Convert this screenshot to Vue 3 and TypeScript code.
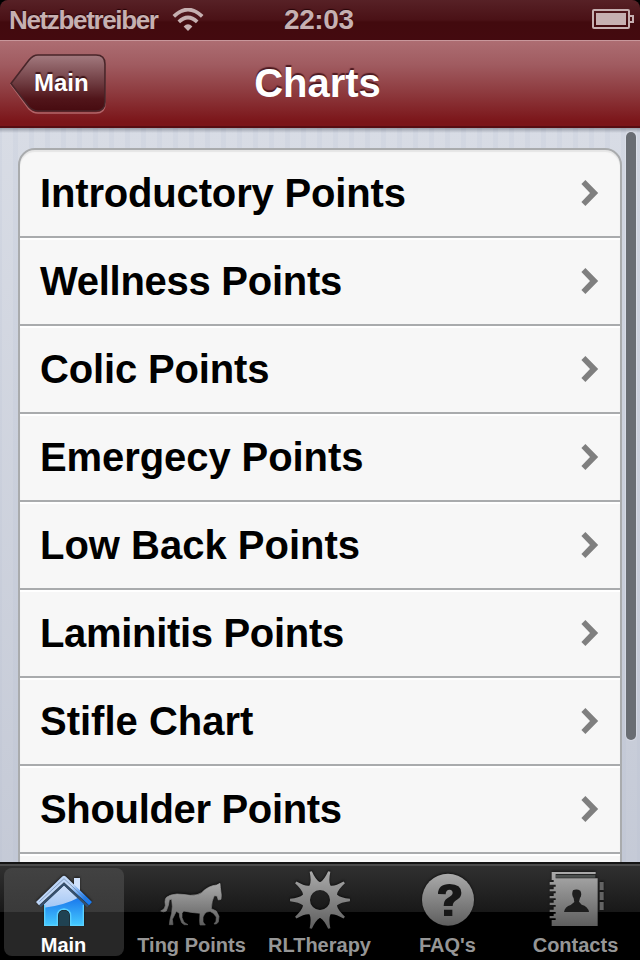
<script setup lang="ts">
import { ref } from 'vue'

interface Chart {
  name: string
  tracking: number
}

interface Tab {
  id: string
  label: string
}

const charts: Chart[] = [
  { name: 'Introductory Points', tracking: -0.16 },
  { name: 'Wellness Points', tracking: -0.27 },
  { name: 'Colic Points', tracking: -0.16 },
  { name: 'Emergecy Points', tracking: -0.08 },
  { name: 'Low Back Points', tracking: 0 },
  { name: 'Laminitis Points', tracking: -0.32 },
  { name: 'Stifle Chart', tracking: 0 },
  { name: 'Shoulder Points', tracking: -0.33 },
]

const tabs: Tab[] = [
  { id: 'main', label: 'Main' },
  { id: 'ting', label: 'Ting Points' },
  { id: 'therapy', label: 'RLTherapy' },
  { id: 'faq', label: "FAQ's" },
  { id: 'contacts', label: 'Contacts' },
]

const active = ref('main')

// Point on the sun icon, from its centre, in polar coordinates
function polar(radius: number, degrees: number): string {
  const a = (degrees * Math.PI) / 180
  return `${(180 + radius * Math.cos(a)).toFixed(1)} ${(120 + radius * Math.sin(a)).toFixed(1)}`
}

// Ten concave rays, drawn as one outline so that the gradient runs through all of them
const sunPath =
  'M' +
  Array.from({ length: 10 }, (_, i) => {
    const a = i * 36
    return [
      polar(54, a - 17),
      `Q${polar(62, a - 6)} ${polar(90, a - 2.2)}`,
      `L${polar(90, a + 2.2)}`,
      `Q${polar(62, a + 6)} ${polar(54, a + 17)}`,
    ].join('')
  }).join('L') +
  'ZM210 120A30 30 0 1 0 150 120A30 30 0 1 0 210 120Z'
</script>

<template>
  <div class="screen">
    <header class="status">
      <span class="carrier">Netzbetreiber</span>
      <svg class="wifi" width="32" height="24" viewBox="0 0 32 24">
        <g fill="none" stroke="#c6b0b1" stroke-width="3.7">
          <path d="M1.8 8.4Q16-5.2 30.2 8.4" />
          <path d="M6.8 13.9Q16 5.1 25.2 13.9" />
        </g>
        <path d="M11.6 18.4Q16 14 20.4 18.4L16 23Z" fill="#c6b0b1" />
      </svg>
      <span class="time">22:03</span>
      <svg class="battery" width="42" height="20" viewBox="0 0 42 20">
        <rect x="1" y="1" width="36" height="18" rx="1" fill="none" stroke="#c6b0b1" stroke-width="2" />
        <rect x="4" y="4" width="30" height="12" fill="#c6b0b1" />
        <path d="M38 7H41V13H38" fill="none" stroke="#c6b0b1" stroke-width="2" />
      </svg>
    </header>

    <nav class="nav">
      <button class="back" type="button">
        <svg class="back-shape" width="98" height="62" viewBox="0 0 98 62">
          <defs>
            <linearGradient id="backFill" x1="0" y1="0" x2="0" y2="1">
              <stop offset="0" stop-color="#a37a7f" />
              <stop offset="0.5" stop-color="#6e3b40" />
              <stop offset="0.78" stop-color="#51151a" />
              <stop offset="1" stop-color="#470b10" />
            </linearGradient>
          </defs>
          <path d="M29 3H87Q96 3 96 12V51Q96 60 87 60H29Q24 60 20 56L2 31.5L20 8Q24 3 29 3Z" fill="none" stroke="#c17c80" stroke-opacity=".75" stroke-width="1.5" />
          <path d="M29 2H87Q96 2 96 11V49Q96 58 87 58H29Q24 58 20 54L2 30.5L20 7Q24 2 29 2Z" fill="url(#backFill)" stroke="#482529" stroke-width="1.6" />
        </svg>
        <span class="back-label">Main</span>
      </button>
      <h1 class="title">Charts</h1>
    </nav>

    <main class="content">
      <ul class="list">
        <li v-for="chart in charts" :key="chart.name" class="row">
          <span :style="{ letterSpacing: chart.tracking + 'px' }">{{ chart.name }}</span>
          <svg width="18" height="28" viewBox="0 0 18 28">
            <path d="M4.4 1L17.2 14L4.4 27L.4 23L9 14L.4 5Z" fill="#7f7f7f" />
          </svg>
        </li>
        <li class="row"></li>
      </ul>
      <div class="scrollbar"></div>
    </main>

    <footer class="tabs">
      <svg class="defs" width="0" height="0">
        <defs>
          <linearGradient id="grey" x1="0" y1="0" x2="0" y2="1">
            <stop offset="0" stop-color="#aaa" />
            <stop offset="1" stop-color="#5e5e5e" />
          </linearGradient>
          <linearGradient id="sky" x1="0" y1="0" x2="0" y2="1">
            <stop offset="0" stop-color="#cfe0fa" />
            <stop offset="1" stop-color="#7fb2f0" />
          </linearGradient>
          <linearGradient id="deep" x1="0" y1="0" x2="0" y2="1">
            <stop offset="0" stop-color="#1976ec" />
            <stop offset="1" stop-color="#45cbff" />
          </linearGradient>
          <linearGradient id="roof" x1="0" y1="0" x2="1" y2="0.5">
            <stop offset="0" stop-color="#b5cff5" />
            <stop offset="0.65" stop-color="#c3daf9" />
            <stop offset="1" stop-color="#197af0" />
          </linearGradient>
        </defs>
      </svg>

      <button
        v-for="tab in tabs"
        :key="tab.id"
        type="button"
        class="tab"
        :class="{ active: active === tab.id }"
        @click="active = tab.id"
      >
        <svg v-if="tab.id === 'main'" class="icon" width="64" height="64" viewBox="96 84 192 192">
          <path d="M132 192L192 136L252 192V258H210V226Q210 208 192 206Q174 208 174 226V258H132Z" fill="url(#sky)" />
          <path d="M132 203Q190 198 238 172L252 190V258H210V226Q210 208 192 206Q174 208 174 226V258H132Z" fill="url(#deep)" />
          <path d="M134 195V256H172V227Q172 209 192 207Q212 209 212 227V256H250V195" fill="none" stroke="#5bd1ff" stroke-width="4" />
          <path d="M175 258V226Q175 214 192 211Q209 214 209 226V258Z" fill="#204252" />
          <path d="M222 114H240V153L222 136Z" fill="#d1e2fb" />
          <path d="M120 199L192 132L264 199" fill="none" stroke="#35506e" stroke-width="7" />
          <path d="M108 186L186 110Q192 105 198 110L276 186L267 196L192 127L117 196Z" fill="url(#roof)" />
          <path d="M118 185L192 116L266 185" fill="none" stroke="#5f7898" stroke-opacity=".6" stroke-width="3" />
        </svg>

        <svg v-else-if="tab.id === 'ting'" class="icon" width="64" height="64" viewBox="93 24 192 192">
          <path d="M95 153Q108 149 109 136Q105 112 118 109Q123 104 144 102Q166 103 184 106Q207 106 218 98Q238 77 263 75L273 70L274 82L277 106L276 118L268 120L264 108L256 107Q248 121 247 146L262 153L270 169L268 186L262 192H255L261 184L262 171L253 160L243 154Q231 155 227 161L222 171V186L229 195H213L212 184L213 160Q187 158 164 153L159 160V173L165 187L177 194H166L158 188L152 171L151 160L142 154L137 164L130 178L132 194H121L123 179L128 160L130 139L128 118L121 119Q120 136 112 153Q103 158 95 153Z" fill="url(#grey)" stroke="url(#grey)" stroke-width="2" />
        </svg>

        <svg v-else-if="tab.id === 'therapy'" class="icon" width="64" height="64" viewBox="84 24 192 192">
          <path :d="sunPath" fill="url(#grey)" fill-rule="evenodd" />
        </svg>

        <svg v-else-if="tab.id === 'faq'" class="icon" width="64" height="64" viewBox="93 24 192 192">
          <circle cx="189" cy="119" r="78" fill="url(#grey)" />
          <path d="M159 102Q159 72 194 72Q229 73 229 98Q229 110 218 118Q203 126 203 138H176Q176 122 187 115Q203 106 203 99Q203 90 194 89Q182 89 182 103ZM177 149H202V168H177Z" fill="#171717" />
        </svg>

        <svg v-else class="icon" width="64" height="64" viewBox="103 84 192 192">
          <path d="M126 96H258V102H138V115H264V258H126V254V240H138V235H120V228H132V221H138V216H120V209H132V200H138V195H120V188H132V180H138V175H120V168H132V160H138V154H120V148H132V140H138V134H120V126H132V120H126Z" fill="url(#grey)" />
          <path d="M139 104H257V113H139Z" fill="#4c504f" />
          <path d="M270 126H282V150H270ZM270 156H282V180H270ZM270 186H282V210H270Z" fill="#636363" />
          <path d="M190 151Q201 146 212 152Q218 164 211 174L208 185L216 194Q235 199 238 216H163Q166 200 183 195L194 186L192 175Q184 164 190 151Z" fill="#1d1d1d" />
        </svg>

        <span class="tab-label">{{ tab.label }}</span>
      </button>
    </footer>
  </div>
</template>

<style>
body {
  margin: 0;
  background: #000;
}
</style>

<style scoped>
.screen {
  width: 640px;
  height: 960px;
  display: flex;
  flex-direction: column;
  overflow: hidden;
  background: #000;
  font-family: "Liberation Sans", Arial, sans-serif;
  font-weight: bold;
}

.status {
  flex: none;
  box-sizing: border-box;
  height: 40px;
  padding: 0 6px 0 9px;
  display: grid;
  grid-template-columns: 163px 112px 1fr 42px;
  align-items: start;
  border-radius: 8px 8px 0 0;
  background: linear-gradient(#572126, #4a1116 50%, #420a0e 55%, #440a0f);
  color: #c6b0b1;
  line-height: 39px;
  text-shadow: 0 -1px 1px #260408;
}

.carrier {
  font-size: 26px;
  line-height: 41px;
  letter-spacing: -1.35px;
}

.wifi {
  margin-top: 8px;
}

.time {
  font-size: 28px;
  letter-spacing: -0.4px;
}

.battery {
  margin-top: 9px;
}

.nav {
  flex: none;
  box-sizing: border-box;
  height: 88px;
  padding: 0 9px;
  display: grid;
  grid-template-columns: 98px 1fr 106px;
  border-top: 1px solid #c8979b;
  border-bottom: 2px solid #570d12;
  background: linear-gradient(#ad6d72, #a05b60 28%, #8e3b3f 60%, #7b1519 95%);
}

.back {
  display: grid;
  justify-items: start;
  align-items: start;
  padding: 12px 0 0;
  border: 0;
  background: none;
  color: #fff;
  font: inherit;
}

.back-shape,
.back-label {
  grid-area: 1 / 1;
}

.back-label {
  padding-left: 25px;
  font-size: 24px;
  line-height: 60px;
  text-shadow: 0 -2px 1px #3d1519;
}

.title {
  margin: 0;
  padding-left: 3px;
  text-align: center;
  color: #fff;
  font-size: 40px;
  line-height: 84px;
  text-shadow: 0 -2px 1px #4d1a20;
}

.content {
  flex: none;
  box-sizing: border-box;
  height: 734px;
  padding: 20px 4px 0 18px;
  display: flex;
  justify-content: space-between;
  overflow: hidden;
  background:
    linear-gradient(rgba(60, 65, 80, 0.4), transparent 5px),
    linear-gradient(rgba(185, 190, 207, 0), rgba(178, 184, 200, 0.5)),
    repeating-linear-gradient(90deg, #d2d7e2 0 2px, #d8dce5 2px 13px, #d2d7e2 13px 16px);
}

.list {
  box-sizing: border-box;
  width: 604px;
  height: 880px;
  margin: 0;
  padding: 0;
  list-style: none;
  border: 2px solid #a9abad;
  border-radius: 17px 17px 0 0;
  background: #f7f7f7;
  box-shadow: inset 0 2px 1px #e5e5e5;
}

.row {
  box-sizing: border-box;
  height: 88px;
  padding: 0 21px 0 20px;
  display: flex;
  align-items: center;
  justify-content: space-between;
  border-bottom: 2px solid #a9abad;
  font-size: 40px;
  line-height: 86px;
  color: #000;
}

.row + .row {
  box-shadow: inset 0 2px #fff;
}

.scrollbar {
  width: 10px;
  height: 608px;
  margin-top: -16px;
  border-radius: 5px;
  background: #696d73;
  box-shadow: 0 0 0 1px rgba(235, 238, 245, 0.35);
}

.tabs {
  flex: none;
  box-sizing: border-box;
  height: 98px;
  display: flex;
  border-top: 2px solid #141414;
  background: linear-gradient(#4b4b4b 0 2px, #303030 2px, #181818 48px, #000 48px);
}

.defs {
  position: absolute;
}

.tab {
  box-sizing: border-box;
  width: 120px;
  height: 88px;
  margin: 4px 4px 0;
  padding: 0;
  display: flex;
  flex-direction: column;
  align-items: center;
  border: 0;
  border-radius: 8px;
  background: none;
  color: #969696;
  font: inherit;
}

.tab.active {
  background: linear-gradient(#424242, #3a3a3a 44px, #272727 44px);
  color: #fff;
}

.icon {
  flex: none;
  filter: drop-shadow(0 -1px 1px rgba(0, 0, 0, 0.6));
}

.tab-label {
  padding-right: 1px;
  font-size: 20px;
  line-height: 26px;
  white-space: nowrap;
}
</style>
